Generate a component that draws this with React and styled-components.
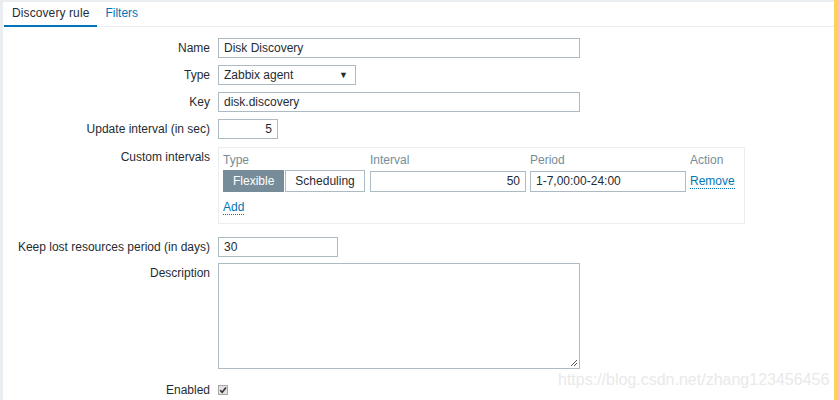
import React from "react";
import styled, { createGlobalStyle } from "styled-components";

const Global = createGlobalStyle`
  html, body { margin: 0; padding: 0; background: #fff; }
  body { font-family: "Liberation Sans", Arial, sans-serif; font-size: 12px; color: #1f2c33; }
  * { box-sizing: border-box; }
`;

const Page = styled.div`
  display: flex;
  width: 837px;
  height: 400px;
  overflow: hidden;
  position: relative;
`;

const Main = styled.div`
  width: 834px;
  height: 400px;
  background: #ebeef0;
  padding: 2px 0 0 3px;
`;

const Stripe = styled.div`
  width: 3px;
  height: 400px;
  background: #fdd259;
`;

const Panel = styled.div`
  background: #fff;
  height: 100%;
`;

const Tabs = styled.div`
  display: flex;
  height: 25px;
  border-bottom: 1px solid #ebeef0;
  padding-left: 1px;
`;

const Tab = styled.div`
  padding: 0 8px 0 8px;
  height: 25px;
  line-height: 23px;
  color: ${(p) => (p.$active ? "#1f2c33" : "#0275b8")};
  border-bottom: 2px solid ${(p) => (p.$active ? "#0275b8" : "transparent")};
  font-size: 12px;
  letter-spacing: ${(p) => (p.$active ? "0.1px" : "0")};
`;

const Form = styled.div`
  display: flex;
  flex-direction: column;
  padding-top: 11px;
`;

const Row = styled.div`
  display: flex;
  align-items: flex-start;
  margin-top: ${(p) => p.$mt ?? 7}px;
`;

const Label = styled.div`
  width: 215px;
  flex: none;
  text-align: right;
  padding-right: 8px;
  line-height: 20px;
  white-space: nowrap;
  color: #1f2c33;
`;

const Input = styled.div`
  width: ${(p) => p.$w}px;
  height: ${(p) => p.$h ?? 20}px;
  border: 1px solid #acbbc2;
  background: #fff;
  padding: 0 5px;
  line-height: ${(p) => (p.$h ?? 20) - 2}px;
  text-align: ${(p) => (p.$right ? "right" : "left")};
  color: #1f2c33;
  white-space: nowrap;
  overflow: hidden;
`;

const Select = styled(Input)`
  display: flex;
  justify-content: space-between;
  align-items: center;
  padding-right: 7px;
`;

const Arrow = styled.span`
  font-size: 9px;
  line-height: 1;
`;

const TextArea = styled.div`
  width: 362px;
  height: 106px;
  border: 1px solid #acbbc2;
  position: relative;
`;

const Grip = styled.svg`
  position: absolute;
  right: 1px;
  bottom: 1px;
`;

const Box = styled.div`
  width: 527px;
  height: 77px;
  border: 1px solid #ebeef0;
  padding: 4px 4px 0 4px;
`;

const Grid = styled.div`
  display: grid;
  grid-template-columns: 143px 156px 156px auto;
  column-gap: 4px;
  align-items: center;
`;

const Head = styled.div`
  color: #768d99;
  line-height: 14px;
  padding-bottom: 3px;
  padding-top: 1px;
`;

const Seg = styled.div`
  display: flex;
`;

const SegBtn = styled.div`
  height: 22px;
  line-height: 20px;
  padding: 0 ${(p) => p.$px}px;
  border: 1px solid ${(p) => (p.$on ? "#768d99" : "#acbbc2")};
  background: ${(p) => (p.$on ? "#768d99" : "#fff")};
  color: ${(p) => (p.$on ? "#fff" : "#1f2c33")};
  margin-right: 1px;
`;

const Link = styled.span`
  color: #0275b8;
  border-bottom: 1px dotted #0275b8;
  line-height: 14px;
  display: inline-block;
`;

const AddRow = styled.div`
  margin-top: 8px;
`;

const Check = styled.span`
  display: inline-block;
  width: 10px;
  height: 10px;
  border: 1px solid #a8a8a8;
  background: #e2e2e2;
  margin-top: 5px;
  position: relative;
`;

const CheckMark = styled.svg`
  position: absolute;
  left: 0;
  top: 0;
`;

const Watermark = styled.div`
  position: absolute;
  left: 558px;
  top: 371px;
  font-family: "Liberation Sans", Arial, sans-serif;
  font-size: 16px;
  color: #e9e9e9;
  white-space: nowrap;
`;

export default function App() {
  return (
    <Page>
      <Global />
      <Main>
        <Panel>
          <Tabs>
            <Tab $active>Discovery rule</Tab>
            <Tab>Filters</Tab>
          </Tabs>
          <Form>
            <Row $mt={0}>
              <Label>Name</Label>
              <Input $w={362}>Disk Discovery</Input>
            </Row>
            <Row>
              <Label>Type</Label>
              <Select $w={138}>
                <span>Zabbix agent</span>
                <Arrow>▼</Arrow>
              </Select>
            </Row>
            <Row>
              <Label>Key</Label>
              <Input $w={362}>disk.discovery</Input>
            </Row>
            <Row>
              <Label>Update interval (in sec)</Label>
              <Input $w={60} $right>5</Input>
            </Row>
            <Row $mt={8}>
              <Label>Custom intervals</Label>
              <Box>
                <Grid>
                  <Head>Type</Head>
                  <Head>Interval</Head>
                  <Head>Period</Head>
                  <Head>Action</Head>
                  <Seg>
                    <SegBtn $on $px={9}>Flexible</SegBtn>
                    <SegBtn $px={9}>Scheduling</SegBtn>
                  </Seg>
                  <Input $w={156} $h={21} $right>50</Input>
                  <Input $w={156} $h={21}>1-7,00:00-24:00</Input>
                  <div><Link>Remove</Link></div>
                </Grid>
                <AddRow><Link>Add</Link></AddRow>
              </Box>
            </Row>
            <Row $mt={13}>
              <Label>Keep lost resources period (in days)</Label>
              <Input $w={120}>30</Input>
            </Row>
            <Row $mt={6}>
              <Label>Description</Label>
              <TextArea>
                <Grip width="9" height="9" viewBox="0 0 9 9">
                  <path d="M8 2 L2 8 M8 5 L5 8" stroke="#555" strokeWidth="1" fill="none" />
                </Grip>
              </TextArea>
            </Row>
            <Row $mt={11}>
              <Label>Enabled</Label>
              <Check>
                <CheckMark width="8" height="8" viewBox="0 0 8 8">
                  <path d="M1.2 4.2 L3.2 6.2 L7 1.5" stroke="#333" strokeWidth="1.6" fill="none" />
                </CheckMark>
              </Check>
            </Row>
          </Form>
        </Panel>
      </Main>
      <Stripe />
      <Watermark>https://blog.csdn.net/zhang123456456</Watermark>
    </Page>
  );
}
